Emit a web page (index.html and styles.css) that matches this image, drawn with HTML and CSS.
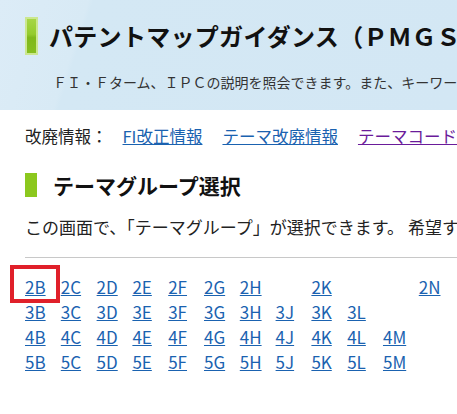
FILE: index.html
```html
<!DOCTYPE html>
<html lang="ja">
<head>
<meta charset="utf-8">
<title>パテントマップガイダンス（ＰＭＧＳ）</title>
<link rel="stylesheet" href="styles.css">
</head>
<body>
<header class="hero">
  <div class="hero-title">
    <span class="hero-icon"></span>
    <h1 class="title">パテントマップガイダンス（ＰＭＧＳ）</h1>
  </div>
  <p class="subtitle">ＦＩ・Ｆターム、ＩＰＣの説明を照会できます。また、キーワードからＦＩ・Ｆタームを検索できます。</p>
</header>
<main class="content">
  <p class="info">改廃情報：<a class="link first" href="#">FI改正情報</a><a class="link" href="#">テーマ改廃情報</a><a class="link visited" href="#">テーマコード改廃情報</a></p>
  <h2 class="section"><span class="section-bar"></span>テーマグループ選択</h2>
  <p class="desc">この画面で、「テーマグループ」が選択できます。 希望するテーマグループを選択してください。</p>
  <hr class="rule">
  <div class="grid">
    <a class="cell link hl" href="#">2B</a><a class="cell link" href="#">2C</a><a class="cell link" href="#">2D</a><a class="cell link" href="#">2E</a><a class="cell link" href="#">2F</a><a class="cell link" href="#">2G</a><a class="cell link" href="#">2H</a><span class="cell"></span><a class="cell link" href="#">2K</a><span class="cell"></span><span class="cell"></span><a class="cell link" href="#">2N</a>
    <a class="cell link" href="#">3B</a><a class="cell link" href="#">3C</a><a class="cell link" href="#">3D</a><a class="cell link" href="#">3E</a><a class="cell link" href="#">3F</a><a class="cell link" href="#">3G</a><a class="cell link" href="#">3H</a><a class="cell link" href="#">3J</a><a class="cell link" href="#">3K</a><a class="cell link" href="#">3L</a><span class="cell"></span><span class="cell"></span>
    <a class="cell link" href="#">4B</a><a class="cell link" href="#">4C</a><a class="cell link" href="#">4D</a><a class="cell link" href="#">4E</a><a class="cell link" href="#">4F</a><a class="cell link" href="#">4G</a><a class="cell link" href="#">4H</a><a class="cell link" href="#">4J</a><a class="cell link" href="#">4K</a><a class="cell link" href="#">4L</a><a class="cell link" href="#">4M</a><span class="cell"></span>
    <a class="cell link" href="#">5B</a><a class="cell link" href="#">5C</a><a class="cell link" href="#">5D</a><a class="cell link" href="#">5E</a><a class="cell link" href="#">5F</a><a class="cell link" href="#">5G</a><a class="cell link" href="#">5H</a><a class="cell link" href="#">5J</a><a class="cell link" href="#">5K</a><a class="cell link" href="#">5L</a><a class="cell link" href="#">5M</a><span class="cell"></span>
  </div>
</main>
</body>
</html>
```
FILE: styles.css
```css
html, body {
  margin: 0;
  padding: 0;
  background: #ffffff;
  overflow: hidden;
}
body {
  font-family: "Noto Sans CJK JP", "Noto Sans", sans-serif;
  color: #222222;
  white-space: nowrap;
}
.hero {
  height: 110px;
  box-sizing: border-box;
  padding: 17px 0 0 25px;
  background: linear-gradient(108deg, #dcecf7 0%, #d8eaf5 18%, #d4e8f4 19%, #d3e7f4 100%);
}
.hero-title {
  display: flex;
  align-items: center;
  height: 38px;
}
.hero-icon {
  flex: none;
  width: 9px;
  height: 34px;
  border: 2px solid #cbe78f;
  background: linear-gradient(180deg, #a6d645 0%, #94cb2c 45%, #7fb81a 55%, #86bf1f 100%);
}
.title {
  margin: 0 0 0 11px;
  font-size: 24px;
  line-height: 38px;
  font-weight: bold;
  color: #111111;
  letter-spacing: 0.3px;
}
.subtitle {
  margin: 17px 0 0 28px;
  font-size: 14px;
  line-height: 20px;
  color: #333333;
}
.content {
  padding: 0 0 0 25px;
}
.info {
  margin: 16px 0 0 0;
  font-size: 16.5px;
  line-height: 20px;
  color: #222222;
}
.link {
  color: #1a62b0;
  text-decoration: underline;
  margin-left: 20px;
}
.info .first {
  margin-left: 15px;
}
.visited {
  color: #6a1b9a;
}
.section {
  display: flex;
  align-items: center;
  margin: 27px 0 0 0;
  height: 24px;
  font-size: 21px;
  line-height: 24px;
  font-weight: bold;
  color: #111111;
}
.section-bar {
  width: 12px;
  height: 24px;
  background: #8cc81e;
  margin-right: 16px;
}
.desc {
  margin: 20px 0 0 0;
  font-size: 17px;
  line-height: 20px;
  color: #222222;
}
.rule {
  margin: 20px 0 0 0;
  border: 0;
  border-top: 1px solid #c8c8c8;
  height: 0;
}
.grid {
  display: grid;
  grid-template-columns: repeat(12, 35.8px);
  grid-auto-rows: 25px;
  margin-top: 16px;
}
.grid .cell {
  margin: 0;
  font-size: 17px;
  line-height: 25px;
  justify-self: start;
}
.hl {
  position: relative;
}
.hl::before {
  content: "";
  position: absolute;
  left: -15px;
  top: -9px;
  width: 42px;
  height: 30px;
  border: 4px solid #e0202a;
}
```
